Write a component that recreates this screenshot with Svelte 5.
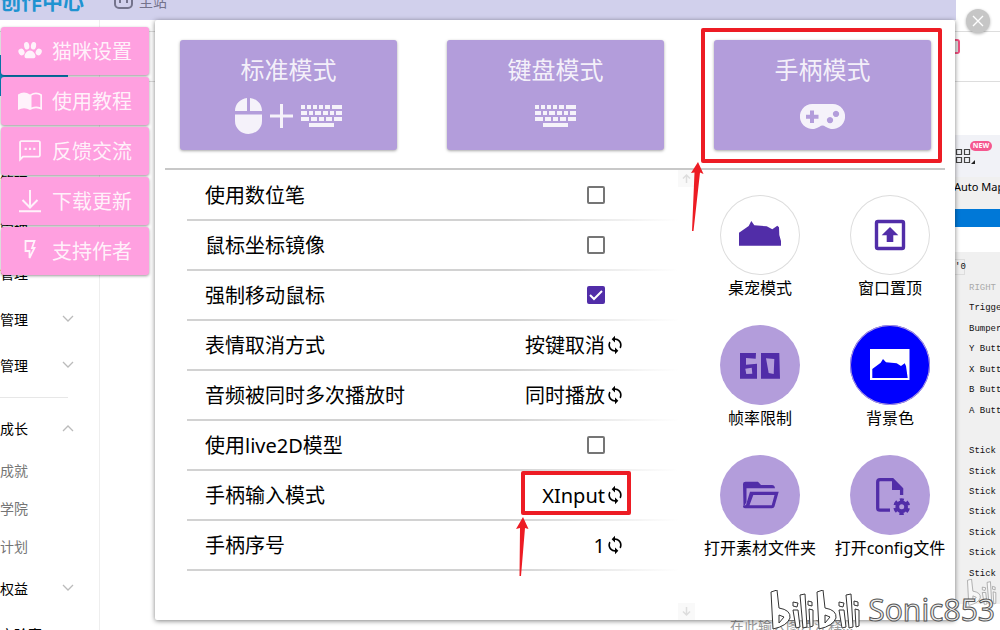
<script>
  const menu = [
    { icon: 'paw', text: '猫咪设置' },
    { icon: 'book', text: '使用教程' },
    { icon: 'chat', text: '反馈交流' },
    { icon: 'download', text: '下载更新' },
    { icon: 'flash', text: '支持作者' },
  ];
  const modes = [
    { text: '标准模式', icons: ['mouse', 'plus', 'keyboard'] },
    { text: '键盘模式', icons: ['keyboard'] },
    { text: '手柄模式', icons: ['pad'], marked: true },
  ];
  let rows = $state([
    { id: 'pen', text: '使用数位笔', checked: false },
    { id: 'mirror', text: '鼠标坐标镜像', checked: false },
    { id: 'force', text: '强制移动鼠标', checked: true },
    { id: 'face', text: '表情取消方式', value: '按键取消' },
    { id: 'audio', text: '音频被同时多次播放时', value: '同时播放' },
    { id: 'live', text: '使用live2D模型', checked: false },
    { id: 'input', text: '手柄输入模式', value: 'XInput', marked: true },
    { id: 'index', text: '手柄序号', value: '1' },
  ]);
  const actions = [
    { icon: 'cat', text: '桌宠模式', tone: 'plain' },
    { icon: 'top', text: '窗口置顶', tone: 'plain' },
    { icon: 'fps', text: '帧率限制', tone: 'soft' },
    { icon: 'picture', text: '背景色', tone: 'blue' },
    { icon: 'folder', text: '打开素材文件夹', tone: 'soft' },
    { icon: 'config', text: '打开config文件', tone: 'soft' },
  ];
  const nav = [
    { text: '管理' },
    { text: '管理' },
    { text: '管理' },
    { text: '管理', arrow: 'down' },
    { text: '管理', arrow: 'down', last: true },
    { text: '成长', arrow: 'up' },
    { text: '成就', sub: true },
    { text: '学院', sub: true },
    { text: '计划', sub: true },
    { text: '权益', arrow: 'down' },
    { text: '实验室' },
  ];
  const buttons = ['Trigger', 'Bumper', 'Y Button', 'X Button', 'B Button', 'A Button'];
  const sticks = ['Stick A', 'Stick A', 'Stick X', 'Stick Y', 'Stick X', 'Stick X', 'Stick X'];
  // x, y, width of every key cap
  const keys = [
    [0, 0, 4], [6, 0, 4], [12, 0, 4], [18, 0, 4], [24, 0, 5], [31, 0, 10],
    [0, 6, 6], [8, 6, 4], [14, 6, 6], [22, 6, 5], [29, 6, 4], [35, 6, 6],
    [0, 12, 8], [10, 12, 6], [18, 12, 5], [25, 12, 6], [33, 12, 8],
    [8, 18, 25],
  ];
</script>

{#snippet bili()}
  <path d="M2 2 8 0 10 18Q22 20 21 28 18 36 4 39ZM10 25 15 27 10 33Z" />
  <path d="M24 12 29 13 28 17 24 16ZM24 20 29 20 31 37 27 38Z" />
  <path d="M31 5 36 4 38 37 34 38Z" />
  <path d="M39 11 43 12 43 16 39 15ZM40 19 44 20 44 36 41 37Z" />
{/snippet}

<div class="desktop">
  <div class="site">
    <header>
      <strong>创作中心</strong>
      <svg width="20" height="20" viewBox="0 0 20 20"><rect x="1" y="1" width="17" height="17" rx="4" fill="none" stroke="#74738c" stroke-width="2" /><path d="M6 9v4M13 9v4" stroke="#74738c" stroke-width="2" /></svg>
      <span>主站</span>
    </header>
    <div class="strip first"></div>
    <div class="strip second"></div>
  </div>

  <nav class="sidebar">
    <div class="publish"></div>
    {#each nav as item}
      <a href="#nav" class:sub={item.sub} class:last={item.last}>
        <span>{item.text}</span>
        {#if item.arrow}
          <svg width="12" height="8" viewBox="0 0 12 8"><path d={item.arrow === 'down' ? 'M1 1 6 6 11 1' : 'M1 7 6 2 11 7'} fill="none" stroke="#bbb" stroke-width="1.3" /></svg>
        {/if}
      </a>
    {/each}
  </nav>

  <p class="caption">在此输入图片注释...</p>

  <aside class="tester">
    <div class="logo-bit"></div>
    <div class="tools">
      <svg width="22" height="18" viewBox="0 0 22 18"><path d="M1.5 2.500h5v5h-5zM9.500 2.500h5v5h-5zM1.500 10.500h5v5h-5zM9.500 10.500h5v5h-5z" fill="none" stroke="#444" stroke-width="1.200" /><path d="M20 13v4h-4z" fill="#222" /></svg>
      <span class="new">NEW</span>
    </div>
    <div class="auto">Auto Map</div>
    <div class="selected"></div>
    <div class="report">
      <div class="tab">'0</div>
      <p class="side">RIGHT</p>
      <div class="lines keys">{#each buttons as line}<p>{line}</p>{/each}</div>
      <div class="lines axes">{#each sticks as line}<p>{line}</p>{/each}</div>
    </div>
  </aside>

  <main class="window">
    <div class="modes">
      {#each modes as mode}
        <div class="mode">
          <button>
            <span>{mode.text}</span>
            <span class="icons">
              {#each mode.icons as icon}
                {#if icon === 'mouse'}
                  <svg width="27" height="36" viewBox="0 0 27 36"><path d="M12 0v13H0C0 6 5 1 12 0ZM15 0v13h12C27 6 22 1 15 0ZM0 16.500h27V23a13.500 13 0 0 1-27 0Z" /></svg>
                {:else if icon === 'plus'}
                  <svg width="23" height="24" viewBox="0 0 23 24"><path d="M10 0h3v10.500h10v3H13V24h-3V13.500H0v-3h10z" /></svg>
                {:else if icon === 'keyboard'}
                  <svg width="41" height="22" viewBox="0 0 41 22">{#each keys as [x, y, w]}<rect {x} {y} width={w} height="4" />{/each}</svg>
                {:else}
                  <svg width="45" height="25" viewBox="0 0 45 25"><path fill-rule="evenodd" d="M12.500 0h20a12.500 12.500 0 1 1-7 22.800q-3-2.600-6 0A12.500 12.500 0 1 1 12.500 0ZM10 6.500v4.200H6v4h4v4.300h4v-4.300h4.500v-4H14V6.500ZM30 13a3.100 3.100 0 1 0 .01 0ZM36 6.800a3.100 3.100 0 1 0 .01 0Z" /></svg>
                {/if}
              {/each}
            </span>
          </button>
          {#if mode.marked}
            <div class="mark"></div>
            <svg class="arrow big" width="14" height="70" viewBox="0 0 14 70"><path d="M7 0 12.500 12 9 10.500 2.500 69H1L3.500 10.500 0 11Z" /></svg>
          {/if}
        </div>
      {/each}
    </div>

    <div class="body">
      <div class="list">
        {#each rows as row}
          <div class="row">
            <label for={row.id}>{row.text}</label>
            {#if row.value}
              <div class="value">
                <button id={row.id}>
                  <span>{row.value}</span>
                  <svg width="20" height="20" viewBox="0 0 24 24"><path d="M12 4V1L8 5l4 4V6c3.310 0 6 2.690 6 6 0 1.010-.25 1.970-.7 2.800l1.460 1.460C19.540 15.030 20 13.570 20 12c0-4.420-3.580-8-8-8zm0 14c-3.310 0-6-2.690-6-6 0-1.010.25-1.970.7-2.800L5.240 7.740C4.460 8.970 4 10.430 4 12c0 4.420 3.580 8 8 8v3l4-4-4-4v3z" /></svg>
                </button>
                {#if row.marked}
                  <div class="mark"></div>
                  <svg class="arrow small" width="13" height="60" viewBox="0 0 13 60"><path d="M7 0 12.500 12 9 11 5 59H3.500L4 11 0 12Z" /></svg>
                {/if}
              </div>
            {:else}
              <input type="checkbox" id={row.id} bind:checked={row.checked} />
            {/if}
          </div>
        {/each}
      </div>
      <div class="scroll">
        <svg width="17" height="17" viewBox="0 0 17 17"><path d="M8.500 13V5M5 8.500 8.500 5 12 8.500" /></svg>
        <svg width="17" height="17" viewBox="0 0 17 17"><path d="M8.500 4v8M5 8.500 8.500 12 12 8.500" /></svg>
      </div>
      <div class="actions">
        {#each actions as a}
          <button class={a.tone}>
            <svg width="80" height="80" viewBox="0 0 80 80">
              {#if a.icon === 'cat'}
                <path d="M19 37.700 28.700 31 31.300 26 34.300 30.300 46.700 31.300 52.300 34.300 57.300 30.700 59 32.300 59.300 40 61 46V50.700H19Z" />
              {:else if a.icon === 'top'}
                <rect x="26.500" y="26.500" width="27" height="27" rx="1.500" fill="none" stroke="#512da8" stroke-width="3.400" />
                <path d="M40 32 48.300 40.300H43.300V47H36.700V40.300H31.700Z" />
              {:else if a.icon === 'fps'}
                <path fill-rule="evenodd" d="M20 28H36L35.700 33.700 26 33V39.700L37 38.700V53.700H20ZM25.300 43.700 31.700 42.700 32.300 48.700 26.300 49ZM41 28H59.300L60 53.700H41ZM46 33.300 54.300 34 53.700 49 48.700 48Z" />
              {:else if a.icon === 'picture'}
                <path fill="#fff" d="M20 24H59.500V55H20Z" />
                <path fill="#00f" d="M22.300 44 30.700 37.700 33 34 36 37.300 46.700 38.300 51 41 54.700 38.300 56 41 57.700 53H22.300Z" />
              {:else if a.icon === 'folder'}
                <path d="M23 29Q23 26.700 25.500 26.700H38L41 30H52Q54.500 30 55 33.300H26.500V47L23.500 52.500Z" />
                <path fill-rule="evenodd" d="M30 36.700H58.700L54.500 51.500Q54 53.300 52 53.300H25Q23 53.300 23 51L26 50ZM33.300 40 29.500 50.300H51.700L54.500 40Z" />
              {:else}
                <path d="M40 55.200H30Q27.700 55.200 27.700 53V27Q27.700 24.700 30 24.700H42.500L51.600 34V40" fill="none" stroke="#512da8" stroke-width="3.300" />
                <path d="M42 23.500 53.300 35H42Z" />
                <circle cx="51.700" cy="51.700" r="4.400" fill="none" stroke="#512da8" stroke-width="3.800" />
                <circle cx="51.700" cy="51.700" r="6.900" fill="none" stroke="#512da8" stroke-width="3" stroke-dasharray="4.200 3.025" stroke-dashoffset="2.100" transform="rotate(-90 51.700 51.700)" />
              {/if}
            </svg>
            <span>{a.text}</span>
          </button>
        {/each}
      </div>
    </div>
  </main>

  <div class="menu">
    {#each menu as item}
      <button>
        <svg width="26" height="26" viewBox="0 0 26 26">
          {#if item.icon === 'paw'}
            <ellipse cx="4.500" cy="14" rx="2.900" ry="3.400" transform="rotate(-30 4.500 14)" />
            <ellipse cx="9.700" cy="7.800" rx="2.600" ry="3.800" transform="rotate(-10 9.700 7.800)" />
            <ellipse cx="16.500" cy="7.800" rx="2.600" ry="3.800" transform="rotate(10 16.500 7.800)" />
            <ellipse cx="21.700" cy="14" rx="2.900" ry="3.400" transform="rotate(30 21.700 14)" />
            <path d="M13 12.500c3 0 5.500 3.500 5.500 5.500 0 3-3 2.200-5.500 2.200S7.500 21 7.500 18c0-2 2.500-5.500 5.500-5.500Z" />
          {:else if item.icon === 'book'}
            <path fill-rule="evenodd" d="M1 6.500Q7 2.500 13 6.500 19 2.500 25 6.500V22Q19 18.500 13 22 7 18.500 1 22ZM14.500 7.500V19.500Q19 17.500 23.300 19.300V7.500Q19 5.200 14.500 7.500Z" />
          {:else if item.icon === 'chat'}
            <path transform="scale(1.083)" d="M20 2H4c-1.100 0-2 .9-2 2v18l4-4h14c1.100 0 2-.9 2-2V4c0-1.100-.9-2-2-2zm0 14.300H5.170L3.700 17.800V3.700h16.600v12.600zM7 9h2v2H7zM11 9h2v2h-2zM15 9h2v2h-2z" />
          {:else if item.icon === 'download'}
            <path d="M13 2V19M5.500 12 13 19.500 20.500 12M2 23.300H24" fill="none" stroke="#fff" stroke-width="2" />
          {:else}
            <path d="M8.500 3H17.500L15 10H17.500L12.500 20V13H8.500Z" fill="none" stroke="#fff" stroke-width="1.800" />
          {/if}
        </svg>
        <span>{item.text}</span>
      </button>
    {/each}
  </div>

  <button class="close" aria-label="关闭">
    <svg width="24" height="24" viewBox="0 0 24 24"><path d="M7 7 17 17M17 7 7 17" stroke="#fff" stroke-width="1.400" /></svg>
  </button>

  <svg class="ghost" width="34" height="27" viewBox="0 0 50 40">{@render bili()}</svg>
  <div class="watermark">
    <svg width="94" height="40" viewBox="0 0 94 40">{@render bili()}<g transform="translate(46 0)">{@render bili()}</g></svg>
    <span>Sonic853</span>
  </div>
</div>

<style>
  :global(body) {
    margin: 0;
    background: #fff;
  }
  .desktop {
    position: relative;
    height: 100vh;
    overflow: hidden;
    font-family: 'Noto Sans', 'Noto Sans CJK SC', sans-serif;
    color: #000;
  }
  svg {
    display: block;
    flex: none;
  }
  p {
    margin: 0;
  }
  button {
    font: inherit;
    color: inherit;
    border: 0;
    padding: 0;
    background: none;
    cursor: pointer;
  }
  header {
    display: flex;
    align-items: center;
    height: 20px;
    margin-right: 44px;
    background: #d1d0ec;
    color: #74738c;
    font-size: 14px;
    line-height: 20px;
    overflow: hidden;
  }
  header strong {
    width: 114px;
    margin-top: -18px;
    font-size: 21px;
    color: #1f93d1;
  }
  header svg {
    margin: -20px 5px 0 0;
  }
  header span {
    margin-top: -16px;
  }
  .strip {
    border-bottom: 1px solid #ddd;
  }
  .first {
    height: 11px;
  }
  .second {
    height: 49px;
  }
  .sidebar {
    position: absolute;
    top: 20px;
    bottom: 0;
    left: 0;
    width: 99px;
    border-right: 1px solid #eee;
    font-size: 14px;
  }
  .publish {
    width: 68px;
    height: 41px;
    margin: 35px 0 62px;
    background: #0a87c0;
  }
  .sidebar a {
    display: flex;
    align-items: center;
    height: 46px;
    color: #000;
    text-decoration: none;
  }
  .sidebar span {
    width: 62px;
  }
  .sidebar .sub {
    height: 38px;
    color: #757575;
  }
  .sidebar .last {
    position: relative;
    margin-bottom: 17px;
  }
  .last::after {
    content: '';
    position: absolute;
    left: 0;
    bottom: -10px;
    width: 68px;
    height: 1px;
    background: #e7e7e7;
  }
  .caption {
    position: absolute;
    bottom: -6px;
    left: 73%;
    font-size: 14px;
    line-height: 20px;
    color: #999;
  }
  .tester {
    position: absolute;
    top: 39px;
    right: 0;
    bottom: 0;
    width: 45px;
    display: flex;
    flex-direction: column;
    overflow: hidden;
    white-space: nowrap;
  }
  .logo-bit {
    box-sizing: border-box;
    width: 5px;
    height: 15px;
    margin-bottom: 81px;
    border: 2px solid #f0507f;
    border-left: 0;
    border-radius: 0 3px 3px 0;
    background: #ddd;
  }
  .tools {
    display: flex;
    height: 42px;
    background: #f1f2f7;
  }
  .tools svg {
    margin-top: 12px;
  }
  .new {
    margin: 6px 0 0 -7px;
    width: 22px;
    height: 10px;
    border-radius: 5px;
    background: #f5588f;
    color: #fff;
    font-size: 7px;
    line-height: 10px;
    font-weight: 700;
    text-align: center;
    position: relative;
  }
  .auto {
    height: 32px;
    background: #f0f0f0;
    font-size: 11px;
    line-height: 20px;
    text-indent: -1px;
  }
  .selected {
    height: 18px;
    margin-bottom: 25px;
    background: #0078d7;
  }
  .report {
    height: 352px;
    background: #f0f0f0;
    font: 9px/20px 'Liberation Mono', monospace;
    color: #111;
  }
  .tab {
    width: 9px;
    height: 14px;
    border: 1px solid #ddd;
    border-left: 0;
    line-height: 14px;
    margin-bottom: 2px;
    position: relative;
    top: 7px;
  }
  .report .side {
    padding: 8px 0 0 14px;
    color: #aaa;
  }
  .lines {
    display: flex;
    flex-direction: column;
    padding-left: 14px;
  }
  .lines p {
    display: flex;
    flex: 1;
    align-items: center;
  }
  .lines.keys {
    height: 123px;
    margin-bottom: 20px;
  }
  .lines.axes {
    height: 143px;
  }
  .window {
    position: absolute;
    top: 20px;
    left: 155px;
    right: 45px;
    bottom: 10px;
    display: flex;
    flex-direction: column;
    background: #fff;
    border-radius: 2px;
    box-shadow: 0 1px 5px rgba(0, 0, 0, 0.5);
  }
  .modes {
    display: flex;
    gap: 50px;
    margin: 0 10px;
    padding: 20px 14px 18px 15px;
    border-bottom: 2px solid #c8c8c8;
  }
  .mode {
    position: relative;
    flex: 1;
  }
  .mode button {
    display: flex;
    flex-direction: column;
    align-items: center;
    width: 100%;
    height: 110px;
    padding-top: 14px;
    border-radius: 3px;
    background: #b39ddb;
    box-shadow: 0 1px 3px rgba(0, 0, 0, 0.35);
    color: rgba(255, 255, 255, 0.87);
    font-size: 24px;
    line-height: 32px;
  }
  .icons {
    display: flex;
    align-items: center;
    gap: 8px;
    height: 60px;
    fill: #fff;
    opacity: 0.87;
  }
  .mark {
    position: absolute;
    border: 4px solid #ed1c24;
    border-radius: 2px;
    pointer-events: none;
  }
  .mode .mark {
    inset: -12px -11px -13px -13px;
  }
  .arrow {
    position: absolute;
    fill: #ed1c24;
    z-index: 1;
  }
  .big {
    top: 122px;
    left: -23px;
  }
  .body {
    display: flex;
    flex: 1;
  }
  .list {
    flex: 1;
    padding: 1px 0 0 32px;
  }
  .row {
    display: flex;
    align-items: center;
    justify-content: space-between;
    height: 48px;
    padding: 0 53px 0 18px;
    border-bottom: 2px solid;
    border-image: linear-gradient(90deg, #d2d2d2 65%, transparent) 1;
    font-size: 20px;
    line-height: 28px;
  }
  .row label {
    padding-top: 2px;
  }
  .value {
    position: relative;
  }
  .value button {
    display: flex;
    align-items: center;
  }
  .value span {
    padding-top: 2px;
  }
  .value .mark {
    inset: -9px -6px -5px -21px;
  }
  .small {
    top: 37px;
    left: -26px;
  }
  input {
    appearance: none;
    box-sizing: border-box;
    width: 18px;
    height: 18px;
    margin: 0 20px 0 0;
    border: 2px solid #757575;
    border-radius: 2px;
    background: #fff;
  }
  input:checked {
    border-color: #512da8;
    background: #512da8 url("data:image/svg+xml,%3Csvg xmlns='http://www.w3.org/2000/svg' viewBox='0 0 14 14'%3E%3Cpath d='M1 7 5 11 13 3' fill='none' stroke='%23fff' stroke-width='2'/%3E%3C/svg%3E");
  }
  .scroll {
    display: flex;
    flex-direction: column;
    justify-content: space-between;
  }
  .scroll svg {
    background: #f9f9f9;
    fill: none;
    stroke: #ddd;
    stroke-width: 1.5;
  }
  .actions {
    display: grid;
    grid-template-columns: 130px 130px;
    grid-auto-rows: 130px;
    padding-top: 25px;
  }
  .actions button {
    display: flex;
    flex-direction: column;
    align-items: center;
    font-size: 16px;
    line-height: 26px;
    white-space: nowrap;
  }
  .actions svg {
    border-radius: 50%;
    fill: #512da8;
  }
  .plain svg {
    box-shadow: inset 0 0 0 1px #ddd;
  }
  .soft svg {
    background: #b39ddb;
  }
  .blue svg {
    background: #00f;
    box-shadow: inset 0 0 0 1px #b39ddb;
  }
  .menu {
    position: absolute;
    top: 27px;
    left: 1px;
    display: flex;
    flex-direction: column;
    gap: 2px;
  }
  .menu button {
    display: flex;
    align-items: center;
    gap: 9px;
    width: 148px;
    height: 48px;
    padding-left: 16px;
    border-radius: 3px;
    background: #ffa0e0;
    box-shadow: 0 1px 3px rgba(0, 0, 0, 0.4);
    color: rgba(255, 255, 255, 0.87);
    font-size: 20px;
    line-height: 28px;
  }
  .menu span {
    padding-top: 2px;
  }
  .menu svg {
    fill: #fff;
    opacity: 0.87;
  }
  .close {
    position: absolute;
    top: 9px;
    right: 10px;
    border-radius: 50%;
    background: #c6c6c6;
    box-shadow: 0 1px 3px rgba(0, 0, 0, 0.3);
  }
  .watermark {
    position: absolute;
    right: 5px;
    bottom: 0;
    display: flex;
    align-items: center;
    gap: 5px;
    font-size: 30px;
    line-height: 40px;
    color: #eee;
    -webkit-text-stroke: 1px #555;
    pointer-events: none;
  }
  .watermark svg,
  .ghost {
    fill: #fff;
    stroke: #333;
    stroke-width: 1;
  }
  .ghost {
    position: absolute;
    right: 0;
    bottom: 24px;
    opacity: 0.5;
  }
</style>
